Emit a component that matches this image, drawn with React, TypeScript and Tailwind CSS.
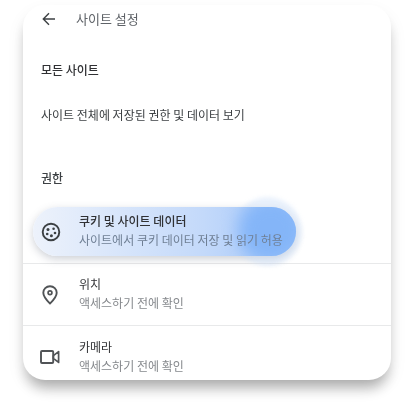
const font = { fontFamily: '"Noto Sans CJK KR", "Noto Sans", sans-serif' };

function CookieIcon() {
  return (
    <svg width="20" height="20" viewBox="0 0 20 20" fill="none" className="shrink-0">
      <circle cx="10" cy="10" r="8.3" stroke="#3c4043" strokeWidth="1.9" />
      <circle cx="7" cy="7.6" r="1.5" fill="#3c4043" />
      <circle cx="12.6" cy="6.8" r="1.3" fill="#3c4043" />
      <circle cx="14" cy="11" r="1.3" fill="#3c4043" />
      <circle cx="6.2" cy="12" r="1.3" fill="#3c4043" />
      <circle cx="10.4" cy="13.8" r="1.5" fill="#3c4043" />
    </svg>
  );
}

function PinIcon() {
  return (
    <svg width="16" height="20" viewBox="0 0 16 20" fill="none" className="shrink-0">
      <path
        d="M8 1.2C4.2 1.2 1.3 4.1 1.3 7.8 1.3 12 5.4 16 8 18.6c2.6-2.6 6.7-6.6 6.7-10.8 0-3.7-2.9-6.6-6.7-6.6z"
        stroke="#505356"
        strokeWidth="1.9"
        strokeLinejoin="round"
      />
      <circle cx="8" cy="7.8" r="1.9" stroke="#505356" strokeWidth="1.7" />
    </svg>
  );
}

function VideoIcon() {
  return (
    <svg width="20" height="16" viewBox="0 0 20 16" fill="none" className="shrink-0">
      <rect x="1" y="2" width="12.2" height="12" rx="1" stroke="#505356" strokeWidth="1.9" />
      <path d="M13.4 6.6 18.6 2.6v10.8l-5.2-4z" stroke="#505356" strokeWidth="1.7" strokeLinejoin="round" />
    </svg>
  );
}

function BackArrow() {
  return (
    <svg width="14" height="14" viewBox="0 0 14 14" fill="none" className="shrink-0">
      <path d="M13 7H1.6M7 1.2 1.3 7 7 12.8" stroke="#3c4043" strokeWidth="1.4" />
    </svg>
  );
}

function PermissionRow({ icon, title, sub }: { icon: React.ReactNode; title: string; sub: string }) {
  return (
    <div className="flex items-center h-[62px] border-b border-[#e8e9ea] last:border-b-0">
      <div className="w-[56px] pr-[2px] flex justify-center">{icon}</div>
      <div className="text-[12px] leading-[19px] pb-[3px]">
        <div className="text-[#303134]">{title}</div>
        <div className="text-[#85888c]">{sub}</div>
      </div>
    </div>
  );
}

export default function App() {
  return (
    <div className="w-[416px] h-[404px] bg-white overflow-hidden pt-[5px] pl-[23px]" style={font}>
      <div className="w-[368px] h-[375px] bg-white rounded-[22px] shadow-[0_11px_14px_-4px_rgba(0,0,0,0.3),0_8px_18px_rgba(0,0,0,0.07)] blur-[0.5px]">
        <div className="h-[28px] flex items-center pl-[19px]">
          <BackArrow />
          <span className="ml-[20px] text-[13px] text-[#5f6368]">사이트 설정</span>
        </div>

        <div className="mt-[28px] pl-[18px] text-[12px] leading-[18px] font-medium text-[#303134]">모든 사이트</div>
        <div className="mt-[27px] pl-[18px] text-[12px] leading-[18px] text-[#3c4043]">
          사이트 전체에 저장된 권한 및 데이터 보기
        </div>
        <div className="mt-[45px] pl-[18px] text-[12px] leading-[18px] font-medium text-[#3c4043]">권한</div>

        {/* 선택된 항목 */}
        <div className="relative mt-[20px] ml-[10px] w-[263px] h-[49px] rounded-full flex items-center shadow-[0_3px_8px_rgba(90,100,120,0.3)]">
          <div className="absolute right-[-6px] top-[-10px] w-[69px] h-[69px] rounded-full bg-[#c9dcf8]/40 blur-[2px]" />
          <div className="absolute inset-0 rounded-full overflow-hidden bg-gradient-to-r from-[#edf2fb] via-[#c3d9fa] via-65% to-[#a2c6f9]">
            <div className="absolute right-[-8px] top-[-10px] w-[66px] h-[66px] rounded-full bg-[#84b5f8] blur-[8px]" />
          </div>
          <div className="relative w-[36px] mr-[10px] pr-[1px] flex justify-center">
            <CookieIcon />
          </div>
          <div className="relative text-[12px] leading-[19px] pb-[4px]">
            <div className="font-medium text-[#303134]">쿠키 및 사이트 데이터</div>
            <div className="text-[#6f7f94]">사이트에서 쿠키 데이터 저장 및 읽기 허용</div>
          </div>
        </div>

        <div className="mt-[7px] border-t border-[#e8e9ea]">
          <PermissionRow icon={<PinIcon />} title="위치" sub="액세스하기 전에 확인" />
          <PermissionRow icon={<VideoIcon />} title="카메라" sub="액세스하기 전에 확인" />
        </div>
      </div>
    </div>
  );
}
